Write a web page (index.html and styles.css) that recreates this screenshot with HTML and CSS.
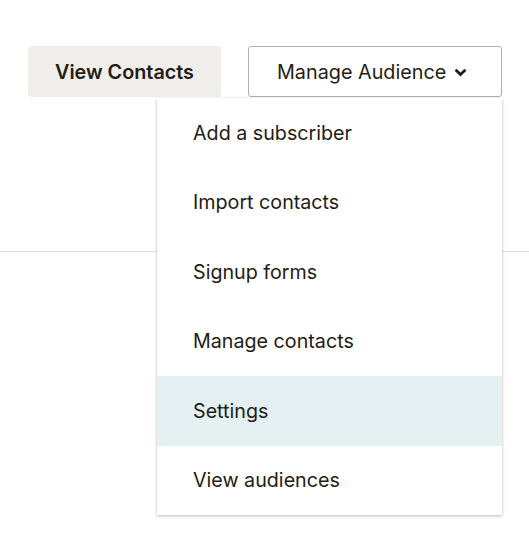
FILE: index.html
```html
<!DOCTYPE html>
<html>
<head>
<meta charset="utf-8">
<link rel="stylesheet" href="styles.css">
</head>
<body>
<div class="page">
<header class="header">
  <div class="actions">
    <button class="btn btn-secondary">View Contacts</button>
    <div class="dropdown">
      <button class="btn btn-outline">Manage Audience
        <svg class="chev" width="13" height="9" viewBox="0 0 13 9"><polyline points="1.6,1.8 6.5,6.6 11.4,1.8" fill="none" stroke="#241c15" stroke-width="2.8" stroke-linecap="butt" stroke-linejoin="miter"/></svg>
      </button>
      <ul class="menu">
        <li class="menu-item">Add a subscriber</li>
        <li class="menu-item">Import contacts</li>
        <li class="menu-item">Signup forms</li>
        <li class="menu-item">Manage contacts</li>
        <li class="menu-item is-hover">Settings</li>
        <li class="menu-item">View audiences</li>
      </ul>
    </div>
  </div>
</header>
<main class="content"></main>
</div>
</body>
</html>
```
FILE: styles.css
```css
html, body {
  margin: 0;
  padding: 0;
  background: #fff;
}
body {
  font-family: "Inter", "Noto Sans", sans-serif;
  color: #241c15;
}
.page {
  min-height: 552px;
  display: flex;
  flex-direction: column;
}
.content {
  flex: 1;
  min-height: 300px;
}
.header {
  height: 252px;
  box-sizing: border-box;
  padding: 46px 0 0 28px;
  border-bottom: 1px solid #dcdcdc;
}
.actions {
  display: flex;
  gap: 27px;
}
.btn {
  height: 51px;
  box-sizing: border-box;
  font-family: inherit;
  color: #241c15;
  font-size: 19.8px;
  border-radius: 3px;
  cursor: pointer;
}
.btn-secondary {
  width: 193px;
  background: #efeeea;
  border: none;
  font-weight: 600;
  padding: 0;
}
.btn-outline {
  width: 254px;
  background: #fff;
  border: 1px solid #b4b2ae;
  font-weight: 400;
  display: flex;
  align-items: center;
  padding: 0 0 0 28px;
  gap: 8px;
}
.chev {
  display: block;
  margin-top: 1px;
}
.dropdown {
  position: relative;
}
.menu {
  position: absolute;
  top: 52px;
  right: 0;
  z-index: 10;
  width: 345px;
  margin: 0;
  padding: 0;
  list-style: none;
  background: #fff;
  box-shadow: 0 1px 3px rgba(0,0,0,0.28);
}
.menu-item {
  height: 69.5px;
  display: flex;
  align-items: center;
  padding-left: 36px;
  font-size: 19.7px;
}
.menu-item.is-hover {
  background: #e4f0f1;
}
```
